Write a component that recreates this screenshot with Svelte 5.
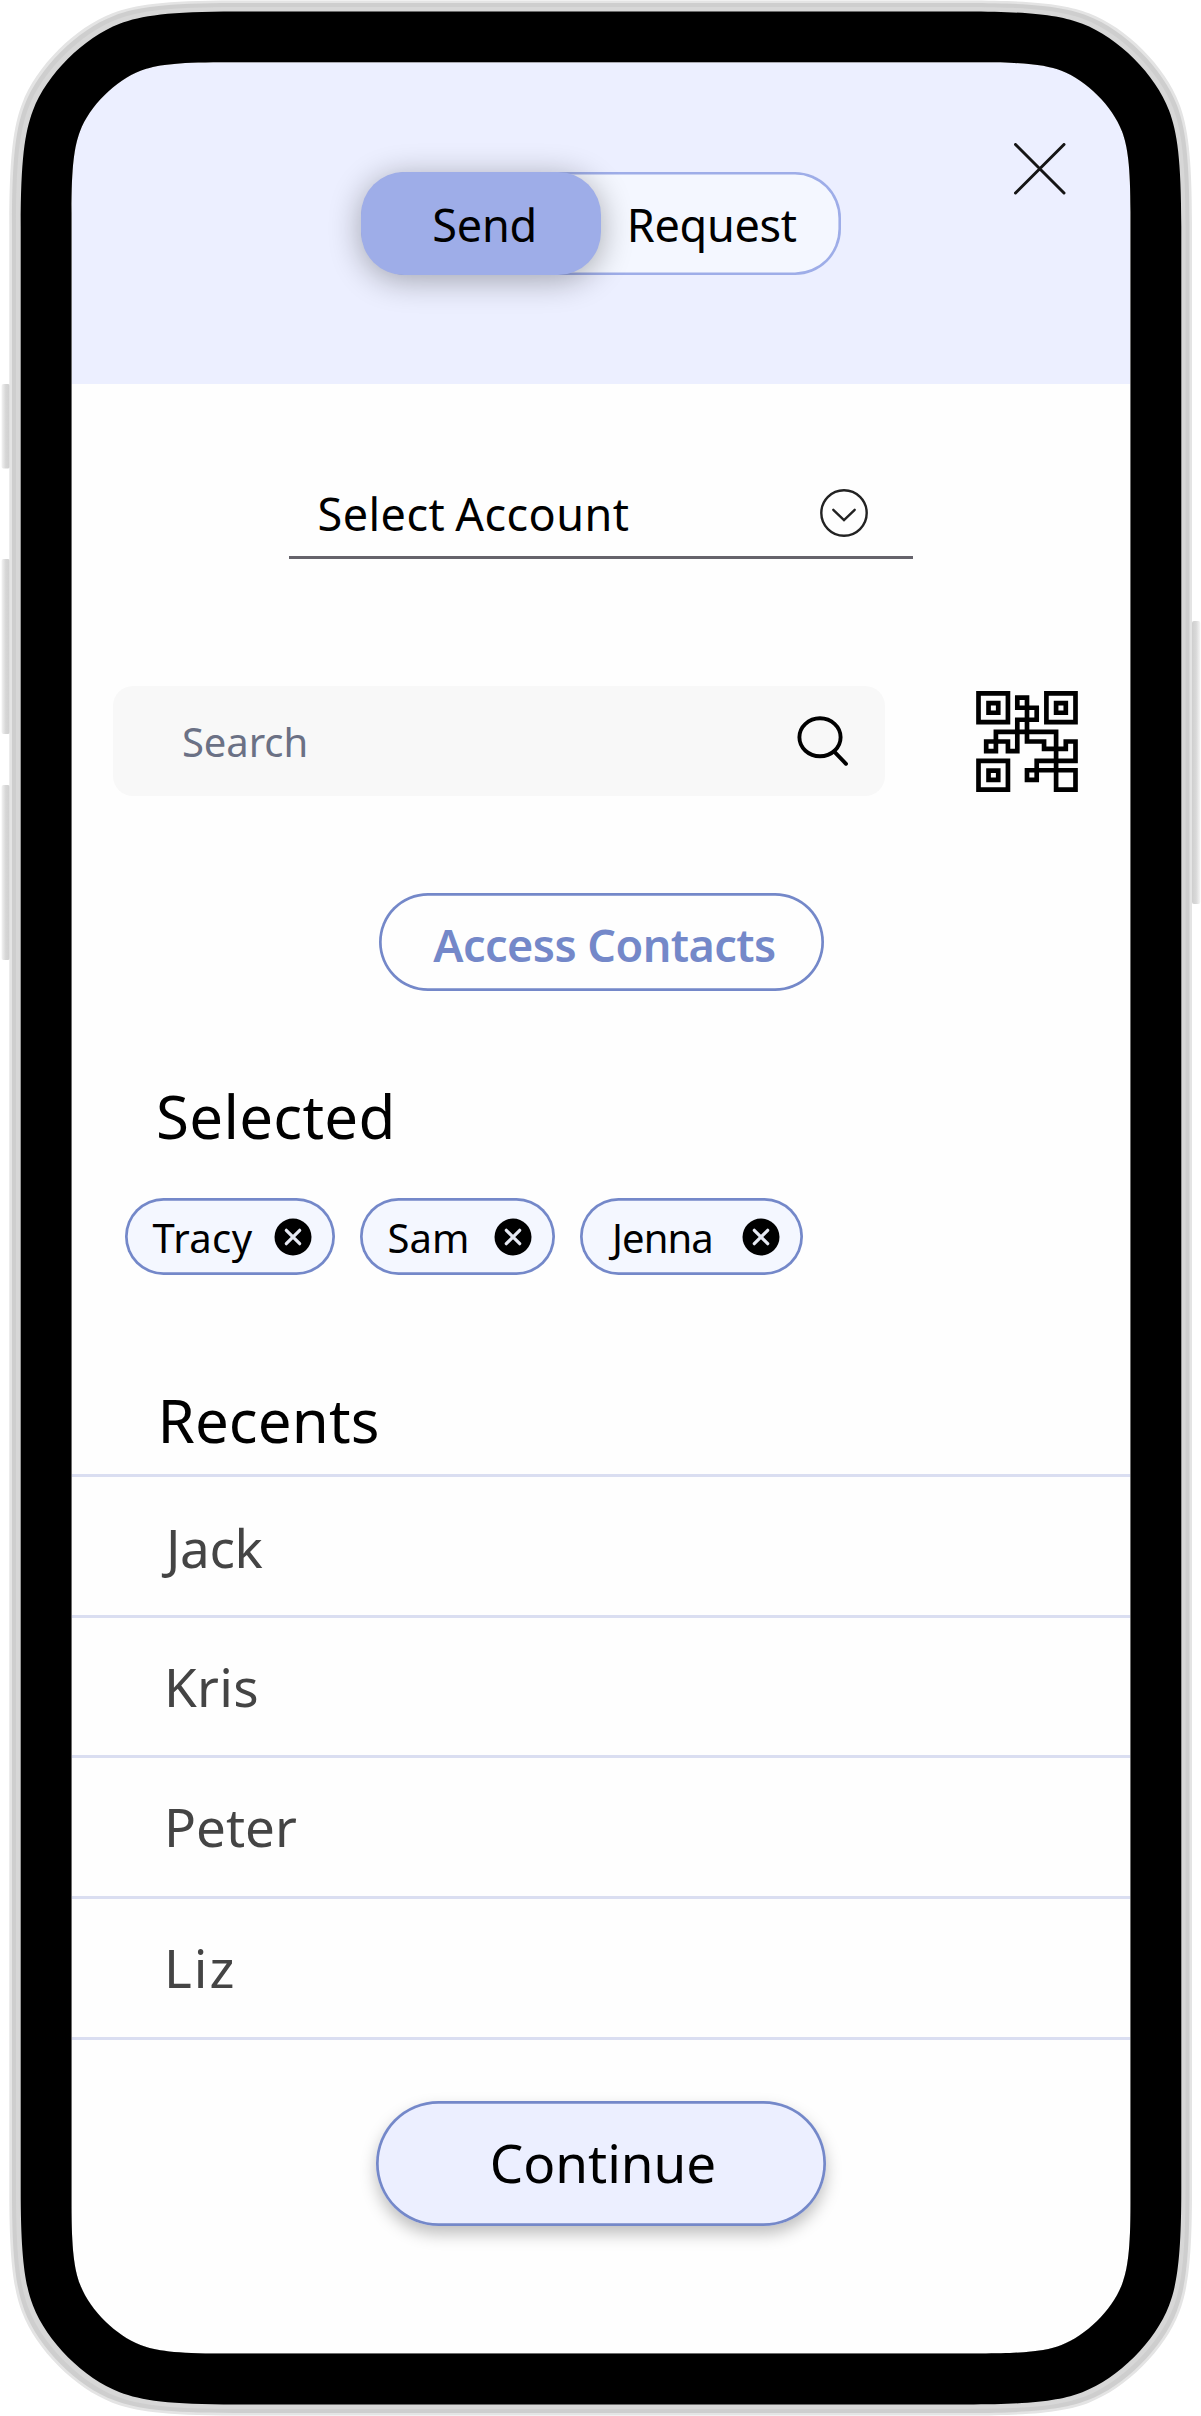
<script>
  const chips = [
    { name: 'Tracy', size: 'tracy' },
    { name: 'Sam', size: 'sam' },
    { name: 'Jenna', size: 'jenna' }
  ];
  const recents = ['Jack', 'Kris', 'Peter', 'Liz'];

  // Rounded rectangle with continuous corners; k holds the corner's control points.
  const k = [[0, 1], [0, 0.69], [0.019, 0.56], [0.057, 0.46], [0.12, 0.294], [0.294, 0.12], [0.46, 0.057], [0.56, 0.019], [0.69, 0], [1, 0]];
  function squircle(x0, y0, x1, y1, r) {
    const map = (fx, fy, rev) => {
      const pts = k.map(([a, b]) => `${fx(a * r).toFixed(2)} ${fy(b * r).toFixed(2)}`);
      return rev ? pts.reverse() : pts;
    };
    const l = (v) => x0 + v, rt = (v) => x1 - v, t = (v) => y0 + v, b = (v) => y1 - v;
    const corners = [map(l, t, false), map(rt, t, true), map(rt, b, false), map(l, b, true)];
    return corners.map((p, i) => `${i ? 'L' : 'M'}${p[0]}C${p.slice(1).join(' ')}`).join('') + 'Z';
  }
  const screen = squircle(71.5, 62.3, 1130.5, 2353.5, 150);
  const rings = [
    { d: squircle(9.3, 0.6, 1192, 2415.4, 224), c: '#e4e4e4' },
    { d: squircle(12, 3, 1189.5, 2413, 222), c: '#cecece' },
    { d: squircle(16, 7, 1185.5, 2409, 219), c: '#d7d7d7' },
    { d: squircle(20.7, 11.5, 1181.3, 2404.5, 215), c: '#000' }
  ];
</script>

<div class="phone">
  <main>
    <header>
      <div class="toggle">
        <button class="send">Send</button>
        <button class="request">Request</button>
      </div>
      <button class="close" aria-label="Close">
        <svg width="52" height="52" viewBox="0 0 52 52"><path d="M1.5 1.5 50 50M50 1.5 1.5 50" /></svg>
      </button>
    </header>

    <button class="account">
      <span>Select Account</span>
      <svg width="48" height="48" viewBox="0 0 48 48"><circle cx="24" cy="24" r="22.7" /><path d="M13.3 20.8 24 31.2l10.7-10.4" /></svg>
    </button>

    <div class="find">
      <div class="search">
        <span>Search</span>
        <svg width="52" height="52" viewBox="0 0 52 52"><ellipse cx="23" cy="22.3" rx="20.6" ry="19" /><path d="M37 36.3 49 48.8" /></svg>
      </div>
      <svg class="qr" width="102" height="101" viewBox="108 93 304 302">
        <path d="M115 100h88v86h-88zM318 100h87v86h-87zM115 302h88v86h-88z" />
        <path d="M145 129h29v29h-29zM347 129h29v29h-29zM145 331h29v28h-29z" />
        <path d="M231 113h29v30h-29zM260 143h29v36h-58v94h-28v-29h-65v29h29v-58h180v173h58v-58h-145v29h29v-57h116v-58h-29v22h-65v-22h-51v-101" />
      </svg>
    </div>

    <button class="contacts">Access Contacts</button>

    <h2 class="selected">Selected</h2>
    <div class="chips">
      {#each chips as chip}
        <div class="chip {chip.size}">
          <span>{chip.name}</span>
          <svg width="38" height="38" viewBox="0 0 38 38"><circle cx="19" cy="19" r="18.5" /><path d="m12.3 12.3 13.4 13.4M25.7 12.3 12.3 25.7" /></svg>
        </div>
      {/each}
    </div>

    <h2 class="recents">Recents</h2>
    <ul>
      {#each recents as name}
        <li>{name}</li>
      {/each}
    </ul>

    <button class="continue">Continue</button>
  </main>

  <svg class="frame" width="1201" height="2416" viewBox="0 0 1201 2416" aria-hidden="true">
    <defs>
      <linearGradient id="left"><stop offset="0" stop-color="#f3f3f3" /><stop offset="0.5" stop-color="#d6d6d6" /><stop offset="1" stop-color="#cfcfcf" /></linearGradient>
      <linearGradient id="right"><stop offset="0" stop-color="#cfcfcf" /><stop offset="0.5" stop-color="#d9d9d9" /><stop offset="1" stop-color="#f6f6f6" /></linearGradient>
    </defs>
    <g fill="url(#left)">
      <rect x="1.5" y="384" width="8.5" height="84.5" rx="2" />
      <rect x="1.5" y="559" width="8.5" height="175" rx="2" />
      <rect x="1.5" y="785" width="8.5" height="175" rx="2" />
    </g>
    <rect x="1192" y="621" width="8.3" height="283" rx="2" fill="url(#right)" />
    {#each rings as ring}
      <path d={ring.d + screen} fill={ring.c} fill-rule="evenodd" />
    {/each}
  </svg>
</div>

<style>
  :global(body) { background: #fff; }
  .phone {
    position: relative;
    width: 1201px;
    height: 2416px;
    overflow: hidden;
    box-sizing: border-box;
    padding: 62px 70px;
    font-family: 'Noto Sans', 'Open Sans', sans-serif;
    color: #000;
  }
  .frame { position: absolute; inset: 0; pointer-events: none; }
  main { display: flex; flex-direction: column; width: 1061px; height: 2292px; background: #fefefe; }
  button { font: inherit; color: inherit; border: 0; padding: 0; margin: 0; background: none; box-sizing: border-box; }
  svg { display: block; flex: none; fill: none; }

  header { height: 322px; box-sizing: border-box; padding: 110px 65px 0 290.5px; background: #ecefff; display: flex; align-items: flex-start; }
  .toggle {
    display: flex;
    box-sizing: border-box;
    width: 480.5px;
    height: 102.5px;
    border-radius: 46px;
    background: #f4f7ff;
    box-shadow: inset 0 0 0 2.6px #9eade8;
    font-size: 45px;
  }
  .send { width: 240.3px; border-radius: 43px; background: #9eade8; box-shadow: 0 5px 32px rgba(0, 0, 0, .32); padding: 3px 0 0 8px; letter-spacing: -.2px; }
  .request { width: 200px; margin-left: 11px; padding-top: 3px; letter-spacing: -.3px; }
  .close { margin: -29px 0 0 auto; }
  .close svg { stroke: #151515; stroke-width: 3; stroke-linecap: round; }

  .account {
    display: flex;
    justify-content: space-between;
    width: 624px;
    height: 103px;
    margin: 72px 0 0 219px;
    padding: 0 45px 0 28.5px;
    border-bottom: 3px solid #65636b;
    font-size: 45px;
    letter-spacing: .45px;
    word-spacing: -2px;
    line-height: 115px;
  }
  .account svg { margin-top: 32.5px; stroke: #222; stroke-width: 2.4; stroke-linecap: round; }

  .find { display: flex; margin: 127px 0 0 43px; }
  .search {
    display: flex;
    align-items: center;
    justify-content: space-between;
    box-sizing: border-box;
    width: 772px;
    height: 110px;
    padding: 0 36px 0 69px;
    border-radius: 20px;
    background: #f8f8f8;
    color: #6b7185;
    font-size: 40px;
    letter-spacing: -.1px;
  }
  .search svg { stroke: #000; stroke-width: 3.9; stroke-linecap: round; }
  .qr { margin: 5px 0 0 91px; stroke: #000; stroke-width: 14; overflow: visible; }

  .contacts {
    width: 445px;
    height: 98px;
    margin: 97px 0 0 308.5px;
    padding: 4px 0 0 7px;
    border-radius: 49px;
    box-shadow: inset 0 0 0 2.7px #7488c9;
    color: #7488c9;
    font-size: 45px;
    font-weight: 600;
    letter-spacing: -.55px;
  }

  h2 { margin: 0 0 0 86px; font-size: 60px; font-weight: 400; line-height: 80px; letter-spacing: .3px; }
  .selected { margin-top: 85px; }
  .chips { display: flex; gap: 25px; margin: 41.5px 0 0 55px; }
  .chip {
    display: flex;
    align-items: center;
    justify-content: space-between;
    box-sizing: border-box;
    height: 77px;
    padding: 2px 23.5px 0 27.5px;
    border-radius: 39px;
    box-shadow: inset 0 0 0 2.7px #7488c9;
    background: #f4f7ff;
    font-size: 40px;
  }
  .tracy { width: 210px; letter-spacing: .4px; }
  .sam { width: 195px; }
  .jenna { width: 223px; padding-left: 32px; letter-spacing: -.9px; }
  .chip circle { fill: #000; }
  .chip path { stroke: #e6e9f3; stroke-width: 3.2; stroke-linecap: round; }

  .recents { margin: 105.5px 0 0 87.5px; letter-spacing: .1px; }
  ul { list-style: none; margin: 14px 0 0; padding: 0; border-top: 3px solid #dadef1; }
  li { height: 140.7px; box-sizing: border-box; border-bottom: 3px solid #dadef1; padding-left: 94px; font-size: 53px; line-height: 138px; color: #444; }
  li:first-child { padding-left: 96px; line-height: 142.5px; letter-spacing: -.4px; }
  li:nth-child(2) { letter-spacing: .3px; }
  li:last-child { letter-spacing: 2px; }

  .continue {
    width: 450px;
    height: 125px;
    margin: 60.8px 0 0 306px;
    padding-left: 4px;
    border-radius: 62.5px;
    background: #ecefff;
    box-shadow: inset 0 0 0 2.7px #7488c9, 0 8px 16px rgba(0, 0, 0, .25);
    font-size: 53px;
    line-height: 124px;
  }
</style>
